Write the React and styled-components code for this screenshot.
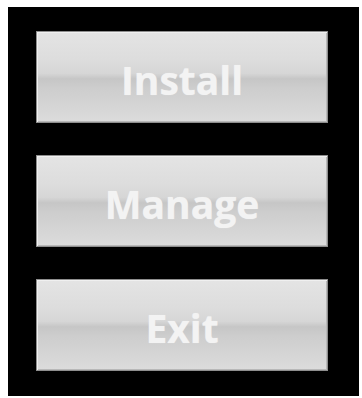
import React from "react";
import styled, { createGlobalStyle } from "styled-components";

const GlobalStyle = createGlobalStyle`
html, body {
margin: 0;
padding: 0;
background: #ffffff;
}
`;

const Page = styled.div`
width: 362px;
height: 398px;
box-sizing: border-box;
padding: 7px 3px 2px 8px;
background: #ffffff;
`;

const Panel = styled.div`
width: 351px;
height: 389px;
box-sizing: border-box;
padding: 24px 31px 25px 28px;
background: #000000;
display: flex;
flex-direction: column;
gap: 32px;
`;

const MenuButton = styled.button`
height: 92px;
width: 292px;
box-sizing: border-box;
border: 1px solid #8e8e8e;
padding: 5px 0 0 0;
margin: 0;
background: linear-gradient(
  to bottom,
  #e4e4e4 0%,
  #dddddd 30%,
  #d6d6d6 46%,
  #c6c6c6 52%,
  #cdcdcd 62%,
  #d6d6d6 85%,
  #dcdcdc 100%
);
box-shadow: inset 1px 1px 0 #f0f0f0, inset -1px -1px 0 #b8b8b8;
font-family: "Open Sans", "DejaVu Sans", sans-serif;
font-weight: bold;
font-size: 39px;
color: #f3f3f3;
text-shadow: 0 0 1px rgba(255, 255, 255, 0.5);
display: flex;
align-items: center;
justify-content: center;
cursor: pointer;
`;

function App() {
    const items = ["Install", "Manage", "Exit"];

    return (
        <>
            <GlobalStyle />
            <Page>
                <Panel>
                    {items.map((label) => (
                        <MenuButton key={label}>{label}</MenuButton>
                    ))}
                </Panel>
            </Page>
        </>
    );
}

export default App;
